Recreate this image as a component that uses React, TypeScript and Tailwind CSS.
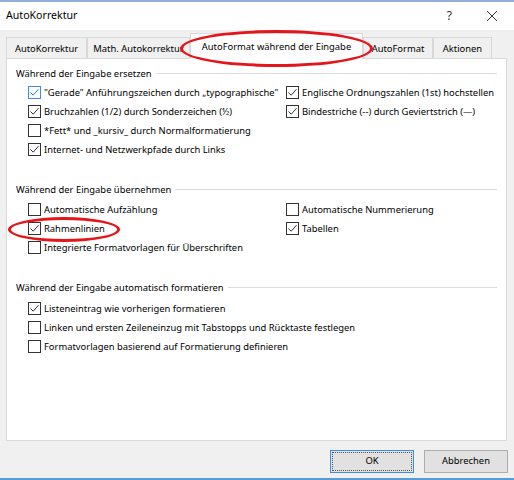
import React from 'react';

type Option = { label: string; checked: boolean; focused?: boolean };

const font = { fontFamily: '"Noto Sans", "Open Sans", sans-serif' };

const Check = ({ checked, focused }: { checked: boolean; focused?: boolean }) => (
  <span
    className={`flex h-[13px] w-[13px] shrink-0 items-center justify-center border bg-white ${
      focused ? 'border-[#3c8ce7]' : 'border-[#333333]'
    }`}
  >
    {checked && (
      <svg width="11" height="11" viewBox="0 0 11 11">
        <path
          d="M1.5 5.5 L4.2 8.2 L9.5 2.2"
          fill="none"
          stroke={focused ? '#2f78cf' : '#333333'}
          strokeWidth="1"
        />
      </svg>
    )}
  </span>
);

const Row = ({ opt }: { opt: Option }) => (
  <div className="flex h-[19px] items-center gap-[3px]">
    <Check checked={opt.checked} focused={opt.focused} />
    <span className="whitespace-nowrap text-[9.4px] leading-[13px] text-black">{opt.label}</span>
  </div>
);

const Heading = ({ children }: { children: React.ReactNode }) => (
  <div className="flex h-[16px] items-center gap-[4px]">
    <span className="whitespace-nowrap text-[9.4px] leading-[13px] text-black">{children}</span>
    <span className="h-px flex-1 bg-[#dcdcdc]" />
  </div>
);

const Tab = ({ label, width, active }: { label: string; width: string; active?: boolean }) => (
  <div
    className={`flex items-center justify-center whitespace-nowrap border border-b-0 border-[#d9d9d9] text-[9.4px] leading-[13px] text-black ${width} ${
      active ? 'relative z-10 -mb-px h-[26px] bg-white' : 'h-[21px] bg-[#f0f0f0]'
    }`}
  >
    {label}
  </div>
);

const ersetzenLeft: Option[] = [
  { label: '"Gerade" Anführungszeichen durch „typographische"', checked: true, focused: true },
  { label: 'Bruchzahlen (1/2) durch Sonderzeichen (½)', checked: true },
  { label: '*Fett* und _kursiv_ durch Normalformatierung', checked: false },
  { label: 'Internet- und Netzwerkpfade durch Links', checked: true },
];

const ersetzenRight: Option[] = [
  { label: 'Englische Ordnungszahlen (1st) hochstellen', checked: true },
  { label: 'Bindestriche (--) durch Geviertstrich (—)', checked: true },
];

const uebernehmenLeft: Option[] = [
  { label: 'Automatische Aufzählung', checked: false },
  { label: 'Rahmenlinien', checked: true },
  { label: 'Integrierte Formatvorlagen für Überschriften', checked: false },
];

const uebernehmenRight: Option[] = [
  { label: 'Automatische Nummerierung', checked: false },
  { label: 'Tabellen', checked: true },
];

const formatieren: Option[] = [
  { label: 'Listeneintrag wie vorherigen formatieren', checked: true },
  { label: 'Linken und ersten Zeileneinzug mit Tabstopps und Rücktaste festlegen', checked: false },
  { label: 'Formatvorlagen basierend auf Formatierung definieren', checked: false },
];

export default function App() {
  return (
    <div className="relative h-[480px] w-[514px] overflow-hidden bg-[#f0f0f0]" style={font}>
      <div className="h-[2px] bg-[#8fb0d4]" />

      {/* title bar */}
      <div className="flex h-[28px] items-center bg-white pl-[6px] pr-[16px]">
        <span className="text-[10.6px] text-black">AutoKorrektur</span>
        <span className="ml-auto mr-[34px] text-[12px] text-[#333]">?</span>
        <svg width="12" height="12" viewBox="0 0 12 12">
          <path d="M1 1 L11 11 M11 1 L1 11" stroke="#333" strokeWidth="1" />
        </svg>
      </div>

      {/* tabs */}
      <div className="flex h-[28px] items-end pl-[6px]">
        <Tab label="AutoKorrektur" width="w-[81px]" />
        <Tab label="Math. Autokorrektur" width="w-[103px]" />
        <Tab label="AutoFormat während der Eingabe" width="w-[173px]" active />
        <Tab label="AutoFormat" width="w-[70px]" />
        <Tab label="Aktionen" width="w-[59px]" />
      </div>

      {/* page */}
      <div className="mx-[6px] h-[383px] w-[501px] border border-[#d9d9d9] bg-white px-[9px] pt-[6px]">
        <Heading>Während der Eingabe ersetzen</Heading>
        <div className="mt-[2px] grid grid-cols-[258px_1fr] pl-[12px]">
          <div>
            {ersetzenLeft.map((o) => (
              <Row key={o.label} opt={o} />
            ))}
          </div>
          <div>
            {ersetzenRight.map((o) => (
              <Row key={o.label} opt={o} />
            ))}
          </div>
        </div>

        <div className="mt-[22px]">
          <Heading>Während der Eingabe übernehmen</Heading>
        </div>
        <div className="mt-[3px] grid grid-cols-[258px_1fr] pl-[12px]">
          <div>
            {uebernehmenLeft.map((o) => (
              <Row key={o.label} opt={o} />
            ))}
          </div>
          <div>
            {uebernehmenRight.map((o) => (
              <Row key={o.label} opt={o} />
            ))}
          </div>
        </div>

        <div className="mt-[22px]">
          <Heading>Während der Eingabe automatisch formatieren</Heading>
        </div>
        <div className="mt-[4px] pl-[12px]">
          {formatieren.map((o) => (
            <Row key={o.label} opt={o} />
          ))}
        </div>
      </div>

      {/* buttons */}
      <div className="mt-[9px] flex justify-end gap-[10px] pr-[6px]">
        <button className="flex h-[23px] w-[84px] items-center justify-center border border-[#3c8ce7] bg-[#e1e1e1] p-px">
          <span className="flex h-full w-full items-center justify-center border border-dotted border-[#555] text-[9.4px] text-black">
            OK
          </span>
        </button>
        <button className="flex h-[23px] w-[84px] items-center justify-center border border-[#adadad] bg-[#e1e1e1] text-[9.4px] text-black">
          Abbrechen
        </button>
      </div>

      <div className="absolute bottom-0 left-0 h-[2px] w-full bg-[#5b9bd5]" />

      {/* red markings */}
      <div className="pointer-events-none absolute left-[180px] top-[30px] z-20 h-[37px] w-[193px] rounded-[50%] border-[3px] border-[#e3161b]" />
      <div className="pointer-events-none absolute left-[8px] top-[217px] z-20 h-[25px] w-[112px] rounded-[50%] border-[3px] border-[#e3161b]" />
    </div>
  );
}
